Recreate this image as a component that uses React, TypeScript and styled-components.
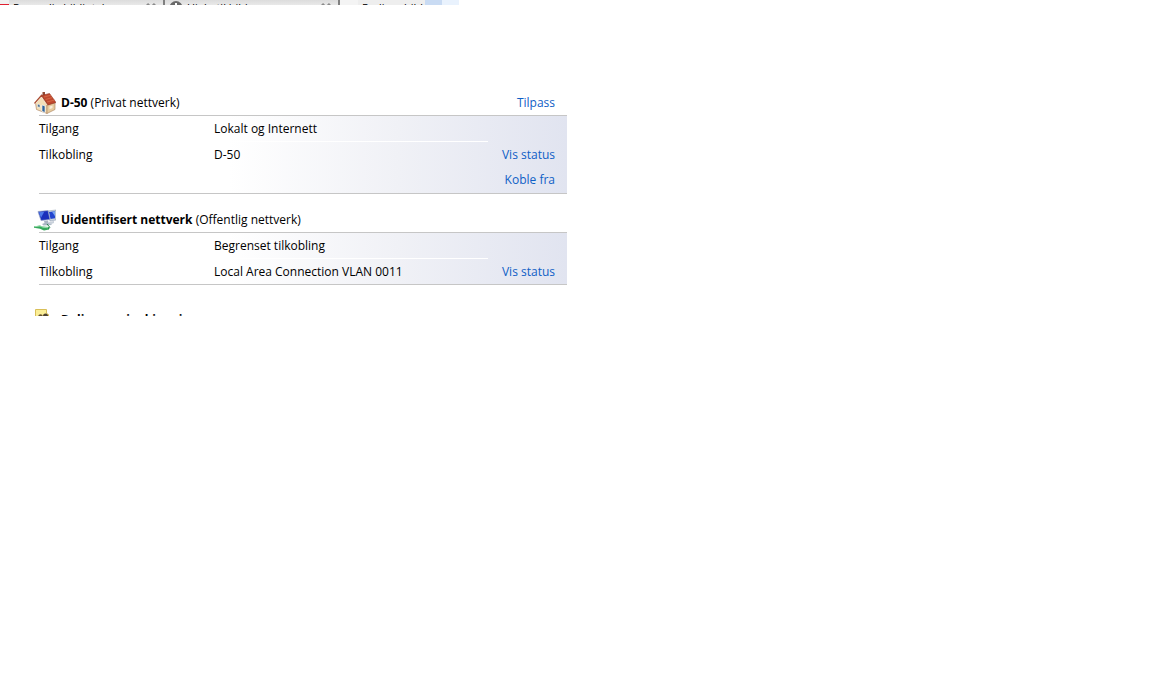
import React from "react";
import styled, { createGlobalStyle } from "styled-components";

const Global = createGlobalStyle`
  * { box-sizing: border-box; }
  body {
    margin: 0;
    background: #fff;
    color: #000;
    font: 12px/16px "Open Sans", "Noto Sans", sans-serif;
  }
`;

/* Only the upper edge of the tab strip is on screen. */
const TabStrip = styled.nav`
  display: flex;
  align-items: flex-start;
  width: 460px;
  max-width: 100%;
  height: 5px;
  overflow: hidden;
`;

const RedRule = styled.span`
  flex: 0 0 9px;
  height: 5px;
  border-bottom: 1px solid #e02030;
  background: #f0f0f0;
`;

const Tab = styled.button<{ $width: number }>`
  flex: 0 0 ${(p) => p.$width}px;
  min-width: 0;
  display: flex;
  align-items: flex-start;
  gap: 4px;
  height: 20px;
  padding: 0 6px 0 4px;
  border: 0;
  border-right: 2px solid #808080;
  background: linear-gradient(#dcdcdc, #e9e9e9 5px);
  color: #000;
  font: 11px/16px "Open Sans", "Noto Sans", sans-serif;
  text-align: left;
`;

const MenuButton = styled(Tab)`
  padding-right: 0;
  border-right: 0;
  background: #eeeeee;
`;

const TabLabel = styled.span`
  flex: 1;
  white-space: nowrap;
`;

const Spacer = styled.span`
  flex: 0 0 18px;
  height: 5px;
  background: #f4f4f4;
`;

const Swatch = styled.span<{ $color: string }>`
  flex: 0 0 17px;
  height: 5px;
  background: ${(p) => p.$color};
`;

const Content = styled.main`
  width: 567px;
  max-width: 100%;
  padding: 86px 0 0 34px;
`;

const Section = styled.section`
  margin-bottom: 14px;
`;

const ClippedSection = styled.section`
  height: 8px;
  margin-top: 23px;
  overflow: hidden;
`;

const Heading = styled.header`
  display: flex;
  align-items: center;
  gap: 5px;
  height: 24px;
  padding-right: 12px;

  svg { flex: none; }
`;

const Title = styled.h2`
  flex: 1;
  margin: 0;
  font-size: 12px;
  line-height: 16px;
  font-weight: 700;
`;

const Kind = styled.span`
  font-weight: 400;
`;

const Link = styled.a`
  color: #0f60c6;
  text-decoration: none;
  white-space: nowrap;
`;

const Panel = styled.dl`
  margin: 0 0 0 5px;
  border: solid #c6c6c6;
  border-width: 1px 0;
  background: linear-gradient(90deg, #fff 36%, #f0f1f6 68%, #e1e4f0);
`;

const Row = styled.div<{ $ruled?: boolean }>`
  display: grid;
  grid-template-columns: 175px 1fr 79px;
  align-items: stretch;
  line-height: ${(p) => (p.$ruled ? 25 : 26)}px;
  min-height: 26px;

  &:nth-child(2) { line-height: 25px; min-height: 25px; }
`;

const Term = styled.dt`
  margin: 0;
`;

const Value = styled.dd<{ $ruled?: boolean }>`
  margin: 0;
  border-bottom: ${(p) => (p.$ruled ? "1px solid #fff" : "0")};
`;

const Action = styled.dd`
  margin: 0;
  padding-right: 12px;
  text-align: right;
`;

const HouseIcon = () => (
  <svg width="22" height="22" viewBox="0 0 22 22" aria-hidden="true">
    <path d="M8.500 0h2.500v4H8.500z" fill="#8e4a35" />
    <path d="M1.500 11 7.500 4.500 13 12.500V21.500L2.500 17.500z" fill="#f3dfb8" stroke="#a87a55" strokeWidth=".6" />
    <path d="M13 12.500 21 10.500V17.500L13 21.500z" fill="#e6cb9f" stroke="#a8805a" strokeWidth=".6" />
    <path d="M7.500 3.500 15.500 1.500 22 10.500 14 13z" fill="#c0482e" stroke="#8d3421" strokeWidth=".6" />
    <path d="m10 5 7-1.800M11.500 7.500l7-2M13 10l7.500-2" stroke="#d9704a" strokeWidth=".8" />
    <path d="M.5 11.500 7.500 3.500 14 13" fill="none" stroke="#a9482f" strokeWidth="1.500" />
    <path d="M1.500 11.500 7.500 5 13 13" fill="none" stroke="#fff6e6" strokeWidth=".8" />
    <path d="m8 13 3 1v6.500l-3-1.200z" fill="#2f6399" stroke="#fff" strokeWidth=".6" />
    <path d="m3.500 12 2.500.800v2.700L3.500 14.700z" fill="#4e6f8e" stroke="#fff" strokeWidth=".5" />
    <path d="m15.500 14.500 3-1v2.500l-3 1.200z" fill="#f7efdc" />
  </svg>
);

const NetworkIcon = () => (
  <svg width="22" height="22" viewBox="0 0 22 22" aria-hidden="true">
    <path d="M13.500 2 22 1v10l-6 1z" fill="#c9d3df" stroke="#8796a8" strokeWidth=".5" />
    <path d="M15 3l6-.700v7L16.500 10z" fill="#2345cf" />
    <path d="M18 2.700 21 2.300v5z" fill="#79a5f2" />
    <path d="M4 2.500 14 1.500l2 9-9 1z" fill="#1a2fbb" stroke="#9dabc4" strokeWidth=".7" />
    <path d="m4.800 3.300 5.500-.600-3.300 6z" fill="#4f7ae8" />
    <path d="m10 12 4-.5.500 2.500 3 .5v1.500l-8 .5-1.500-1.500 2.500-1z" fill="#aab5c3" />
    <path d="m14 13 6-1v2l-4 1.500z" fill="#c8d0da" />
    <path d="M0 17.500l6-1 2 1 7 .500v2.500l-5 1-4-1.800-6-1z" fill="#36a85c" />
    <path d="M1 17.700l5-.700 3 1.300 5 .400" fill="none" stroke="#a6e5b6" strokeWidth=".8" />
    <path d="m13 15 3 3.500-2 1.500" fill="none" stroke="#27894a" strokeWidth="1" />
  </svg>
);

const SharingIcon = () => (
  <svg width="22" height="22" viewBox="0 0 22 22" aria-hidden="true">
    <path d="M1.500.5h11v4l2 1V18h-13z" fill="#fbee96" stroke="#d9bf58" />
    <circle cx="6.500" cy="7.500" r="2.300" fill="#65512f" />
    <circle cx="11.500" cy="7" r="2.500" fill="#4d4130" />
    <path d="M3 16c0-8 12-8 13 0z" fill="#6d8fb8" />
  </svg>
);

const InfoIcon = () => (
  <svg width="14" height="14" viewBox="0 0 14 14" aria-hidden="true">
    <circle cx="7" cy="7.500" r="6.500" fill="#6a6a6a" />
    <path d="M6 3h2v2H6zM6 6h2v5H6z" fill="#fff" />
  </svg>
);

const CloseIcon = () => (
  <svg width="12" height="14" viewBox="0 0 12 14" aria-hidden="true">
    <path d="m2 4 8 8M10 4l-8 8" stroke="#8a8a8a" strokeWidth="3" />
  </svg>
);

type Entry = { term: string; value?: string; action?: string };

const Details = ({ entries }: { entries: Entry[] }) => (
  <Panel>
    {entries.map((entry, index) => (
      <Row key={index} $ruled={index === 0}>
        <Term>{entry.term}</Term>
        <Value $ruled={index === 0}>{entry.value}</Value>
        <Action>{entry.action && <Link href="#status">{entry.action}</Link>}</Action>
      </Row>
    ))}
  </Panel>
);

export default function App() {
  return (
    <>
      <Global />
      <TabStrip>
        <RedRule />
        <Tab $width={156}>
          <TabLabel>Personlig bibliotek</TabLabel>
          <CloseIcon />
        </Tab>
        <Tab $width={175}>
          <InfoIcon />
          <TabLabel>Hjelp til bilder</TabLabel>
          <CloseIcon />
        </Tab>
        <Spacer />
        <MenuButton $width={67}>
          <TabLabel>Rediger bilde</TabLabel>
        </MenuButton>
        <Swatch $color="#c9dbf3" />
        <Swatch $color="#e9f2fd" />
      </TabStrip>
      <Content>
        <Section>
          <Heading>
            <HouseIcon />
            <Title>D-50 <Kind>(Privat nettverk)</Kind></Title>
            <Link href="#tilpass">Tilpass</Link>
          </Heading>
          <Details
            entries={[
              { term: "Tilgang", value: "Lokalt og Internett" },
              { term: "Tilkobling", value: "D-50", action: "Vis status" },
              { term: "", action: "Koble fra" },
            ]}
          />
        </Section>
        <Section>
          <Heading>
            <NetworkIcon />
            <Title>Uidentifisert nettverk <Kind>(Offentlig nettverk)</Kind></Title>
          </Heading>
          <Details
            entries={[
              { term: "Tilgang", value: "Begrenset tilkobling" },
              { term: "Tilkobling", value: "Local Area Connection VLAN 0011", action: "Vis status" },
            ]}
          />
        </Section>
        <ClippedSection>
          <Heading>
            <SharingIcon />
            <Title>Deling og gjenkjenning</Title>
          </Heading>
        </ClippedSection>
      </Content>
    </>
  );
}
